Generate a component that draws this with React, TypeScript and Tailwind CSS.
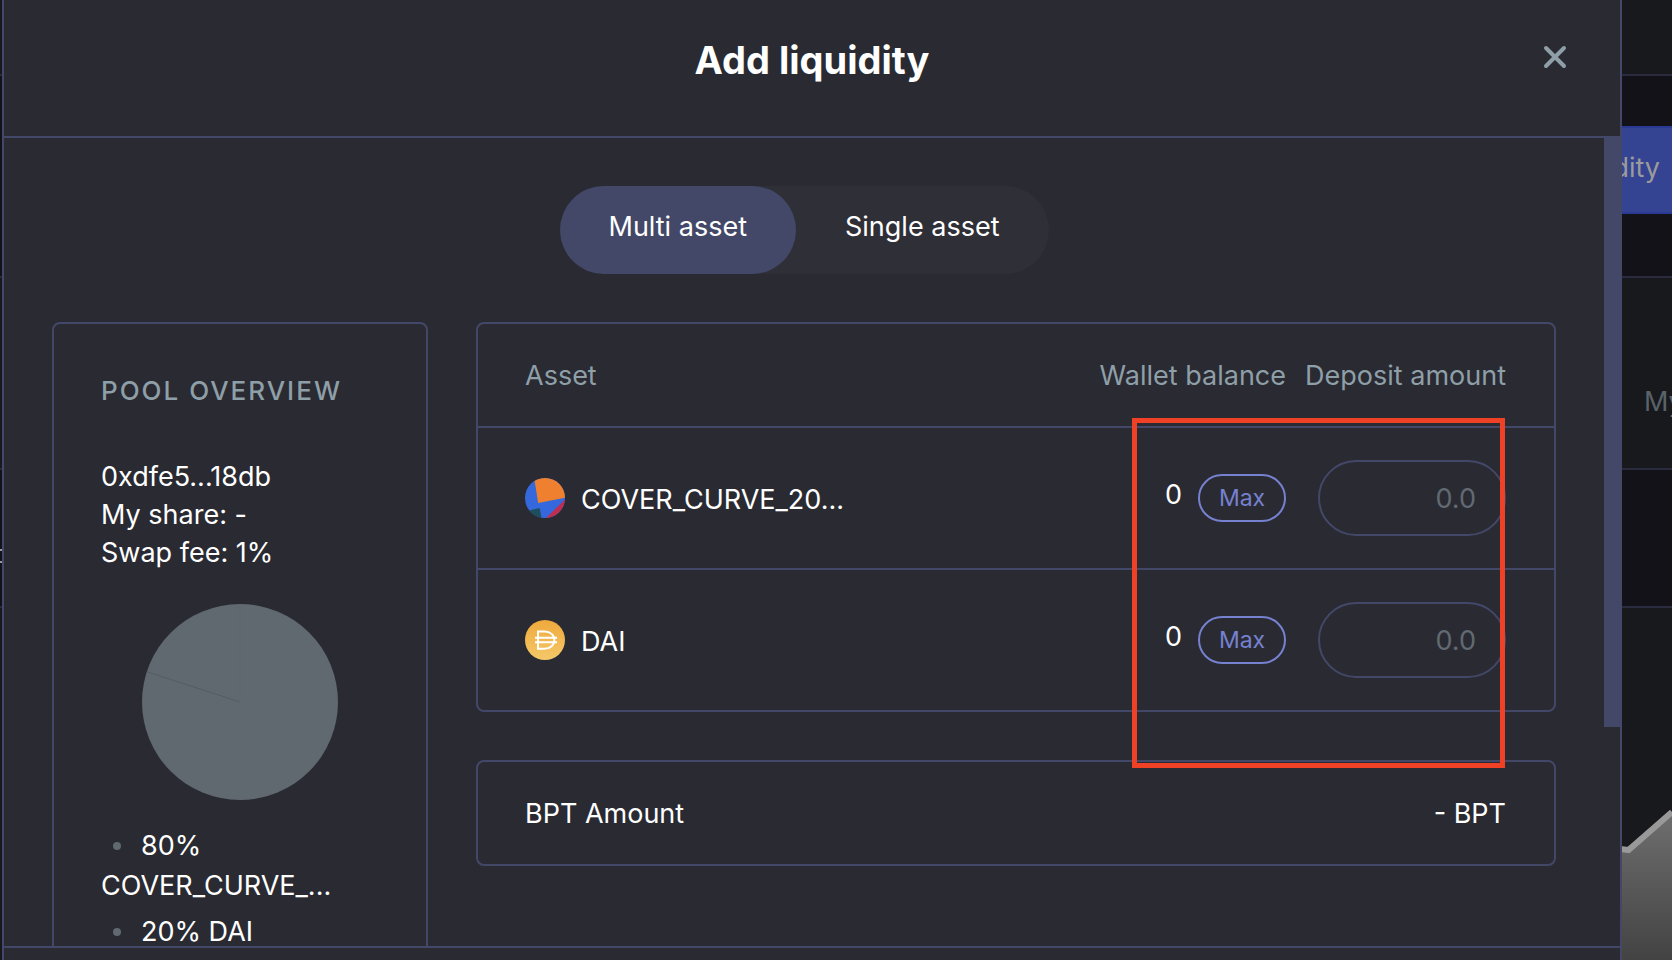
import { useState } from 'react';

const assets = [
  { id: 'cover', name: 'COVER_CURVE_20...', Icon: CoverIcon },
  { id: 'dai', name: 'DAI', Icon: DaiIcon },
];

function CoverIcon() {
  return (
    <svg viewBox="0 0 40 40" className="size-10 shrink-0" aria-hidden="true">
      <clipPath id="cover-clip">
        <circle cx="20" cy="20" r="20" />
      </clipPath>
      <g clipPath="url(#cover-clip)">
        <rect width="40" height="40" fill="#3568dc" />
        <path d="M8.500 -4L13.200 25L44 19V-4Z" fill="#ef8030" />
        <path d="M0 33.500L14.700 30L17.200 44H0Z" fill="#1c4e5c" />
        <path d="M20 41L41 20.500V41Z" fill="#bd2f50" />
      </g>
    </svg>
  );
}

function DaiIcon() {
  return (
    <svg viewBox="0 0 40 40" className="size-10 shrink-0" aria-hidden="true">
      <defs>
        <linearGradient id="dai-fill" x1="0" y1="0" x2="0" y2="1">
          <stop offset="0" stopColor="#efa93c" />
          <stop offset="1" stopColor="#f5c869" />
        </linearGradient>
      </defs>
      <circle cx="20" cy="20" r="20" fill="url(#dai-fill)" />
      <g fill="none" stroke="#fff" strokeWidth="2">
        <path d="M13 11.500H19.500C25.500 11.500 29.300 15 29.300 20C29.300 25 25.500 28.700 19.500 28.700H13Z" />
        <path d="M10 17.800H32M10 22.300H32" />
      </g>
    </svg>
  );
}

function PageBehind() {
  return (
    <div className="absolute inset-0 flex flex-col overflow-hidden bg-[#18191c]" aria-hidden="true">
      <div className="h-[76px] border-b-2 border-[#2a2b3f]" />
      <div className="flex h-[202px] items-start justify-end border-b-2 border-[#2a2b3f] bg-[#131218] pt-[50px]">
        <div className="-mr-8 flex h-[88px] items-center rounded-xl border-2 border-[#2a3a93] bg-[#354393] pr-[42px] pb-1 pl-12 text-[#9b9b9b]">
          Add liquidity
        </div>
      </div>
      <div className="flex h-[192px] items-center justify-end border-b-2 border-[#2a2b3f] pt-[58px]">
        <span className="-mr-[120px] w-[148px] shrink-0 whitespace-nowrap text-[#59636a]">My share</span>
      </div>
      <div className="flex h-[138px] items-center border-b-2 border-[#2a2b3f] bg-[#131218] pt-9">
        <div className="h-3.5 w-2 border-y-2 border-[#9b9b9b]" />
      </div>
      <div className="flex flex-1 items-end justify-end">
        <svg viewBox="0 0 52 160" className="h-[160px] w-[52px]">
          <defs>
            <linearGradient id="area" x1="0" y1="0" x2="0" y2="1">
              <stop offset="0" stopColor="#6e6e6e" />
              <stop offset="1" stopColor="#434343" />
            </linearGradient>
          </defs>
          <path d="M0 50L8 51L52 14V160H0Z" fill="url(#area)" />
          <path d="M0 49L8.500 50L52 12" fill="none" stroke="#999" strokeWidth="6" />
        </svg>
      </div>
    </div>
  );
}

function PoolOverview() {
  return (
    <section className="w-1/4 shrink-0 rounded-lg border-2 border-[#434868] px-[47px] pt-12 pb-12">
      <h2 className="text-[26px] leading-[38px] font-medium tracking-[2px] text-[#8e9fa8] uppercase">Pool overview</h2>
      <div className="mt-12 leading-[38px]">
        <p>0xdfe5...18db</p>
        <p>My share: -</p>
        <p>Swap fee: 1%</p>
      </div>
      <svg viewBox="0 0 196 196" className="mx-auto mt-8 size-[196px]" role="img" aria-label="Pool weights">
        <circle cx="98" cy="98" r="98" fill="#606870" />
        <path d="M98 98L4.800 67.700" stroke="#555c64" strokeWidth="1" />
        <path d="M98 98V0" stroke="#5e666e" strokeWidth="1" />
      </svg>
      <ul className="mt-[26px] flex flex-col gap-1.5 leading-10">
        <li>
          <span className="mr-5 mb-1 ml-3 inline-block size-2 rounded-full bg-[#606870] align-middle" />
          80% COVER_CURVE_...
        </li>
        <li>
          <span className="mr-5 mb-1 ml-3 inline-block size-2 rounded-full bg-[#606870] align-middle" />
          20% DAI
        </li>
      </ul>
    </section>
  );
}

function AssetTable() {
  return (
    <div className="relative">
      <div className="rounded-lg border-2 border-[#434868]">
        <table className="w-full border-separate border-spacing-0">
          <thead>
            <tr className="h-[102px] text-[#8e9fa8]">
              <th scope="col" className="p-0 pt-0.5 pl-[47px] text-left font-normal">Asset</th>
              <th scope="col" className="p-0 pt-0.5 text-right font-normal">Wallet balance</th>
              <th scope="col" className="w-[268px] p-0 pt-0.5 pr-12 text-right font-normal">Deposit amount</th>
            </tr>
          </thead>
          <tbody>
            {assets.map(({ id, name, Icon }) => (
              <tr key={id} className="h-[142px]">
                <td className="border-t-2 border-[#434868] p-0 pl-[47px]">
                  <div className="flex items-center gap-4">
                    <Icon />
                    <span className="pt-1">{name}</span>
                  </div>
                </td>
                <td className="border-t-2 border-[#434868] p-0">
                  <div className="flex items-center justify-end gap-4">
                    <span className="pb-1.5">0</span>
                    <button
                      type="button"
                      className="flex h-12 w-[88px] items-center justify-center rounded-full border-2 border-[#7681d0] text-[23px] text-[#7681d0]"
                    >
                      Max
                    </button>
                  </div>
                </td>
                <td className="border-t-2 border-[#434868] p-0 pr-12">
                  <input
                    type="text"
                    inputMode="decimal"
                    placeholder="0.0"
                    aria-label={`${name} deposit amount`}
                    className="ml-auto block h-[76px] w-[188px] rounded-full border-2 border-[#434868] bg-transparent px-7 text-right placeholder:text-[#616a72] focus:outline-none"
                  />
                </td>
              </tr>
            ))}
          </tbody>
        </table>
      </div>
      <div className="pointer-events-none absolute top-24 right-[51px] h-[350px] w-[373px] border-5 border-[#ee4126]" />
    </div>
  );
}

export default function App() {
  const [tab, setTab] = useState<'multi' | 'single'>('multi');
  return (
    <div className="relative h-screen overflow-hidden font-['Inter',sans-serif] text-[27px] text-white">
      <PageBehind />
      <div
        role="dialog"
        aria-label="Add liquidity"
        className="relative mr-[50px] ml-0.5 flex h-full flex-col border-x-2 border-[#434868] bg-[#2a2a32]"
      >
        <header className="grid h-[138px] shrink-0 grid-cols-[1fr_auto_1fr] items-center border-b-2 border-[#434868] px-12 pb-4">
          <span />
          <h1 className="text-[38px] font-bold">Add liquidity</h1>
          <button type="button" aria-label="Close" className="-mt-1.5 justify-self-end p-[5px]">
            <svg viewBox="0 0 24 24" className="size-6" fill="none" stroke="#8e9fa8" strokeWidth="4" strokeLinecap="round">
              <path d="M3 3L21 21M21 3L3 21" />
            </svg>
          </button>
        </header>
        <main className="flex min-h-0 flex-1">
          <div className="min-w-0 flex-1 overflow-hidden px-12 pt-12">
            <div className="flex justify-center">
              <div className="flex h-[88px] rounded-full bg-[#2f2f38]">
                <button
                  type="button"
                  onClick={() => setTab('multi')}
                  className={tab === 'multi' ? 'rounded-full bg-[#434868] px-[49px] pb-1.5' : 'rounded-full px-[49px] pb-1.5'}
                >
                  Multi asset
                </button>
                <button
                  type="button"
                  onClick={() => setTab('single')}
                  className={tab === 'single' ? 'rounded-full bg-[#434868] px-[49px] pb-1.5' : 'rounded-full px-[49px] pb-1.5'}
                >
                  Single asset
                </button>
              </div>
            </div>
            <div className="mt-12 flex items-start gap-12">
              <PoolOverview />
              <div className="flex min-w-0 flex-1 flex-col gap-12">
                <AssetTable />
                <section className="flex h-[106px] items-center justify-between rounded-lg border-2 border-[#434868] pt-0.5 pr-12 pl-[47px]">
                  <span>BPT Amount</span>
                  <span>- BPT</span>
                </section>
              </div>
            </div>
          </div>
          <div className="-mt-0.5 w-4 shrink-0">
            <div className="h-[73%] bg-[#434868]" />
          </div>
        </main>
        <footer className="h-3.5 shrink-0 border-t-2 border-[#434868]" />
      </div>
    </div>
  );
}
